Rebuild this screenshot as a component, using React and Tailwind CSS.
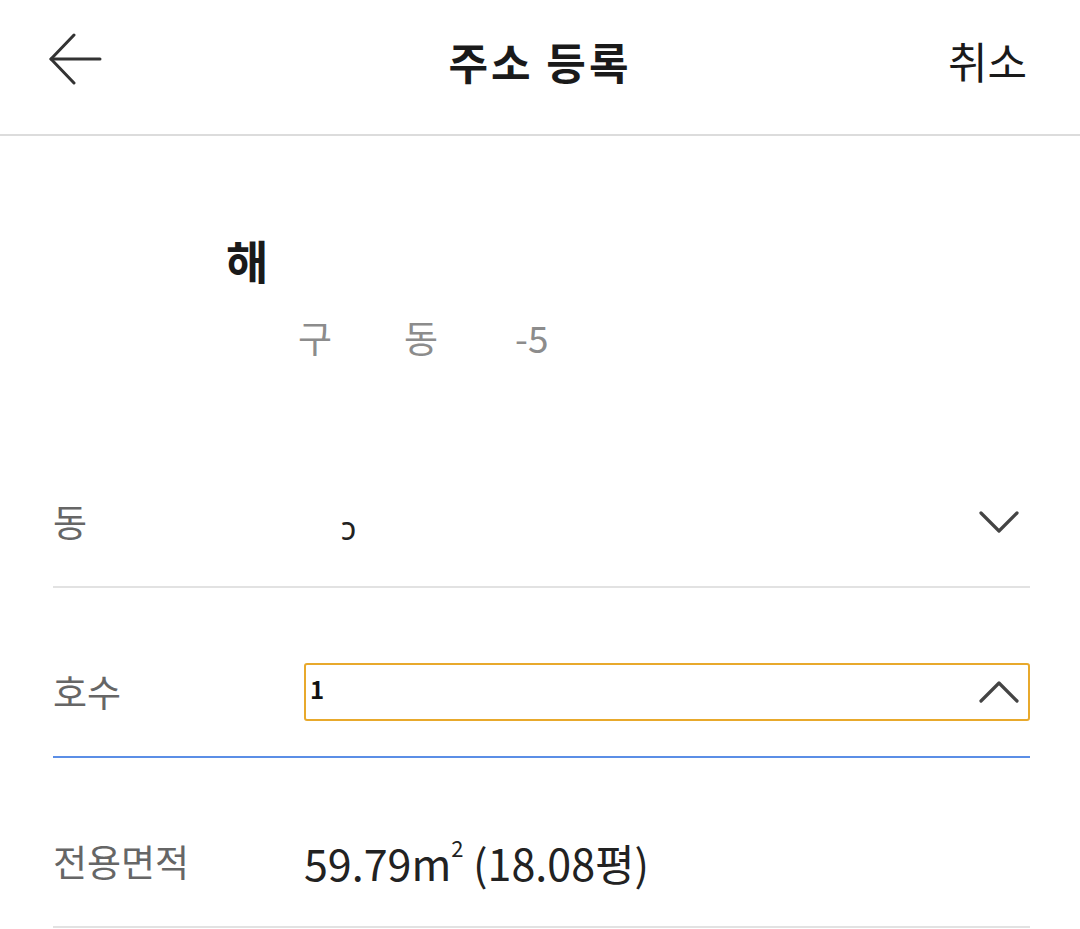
import React from "react";

const font = { fontFamily: '"Noto Sans CJK KR", "Noto Sans", sans-serif' };

function Chevron({ up }) {
  return (
    <svg width="40" height="24" viewBox="0 0 40 24" fill="none" stroke="#444" strokeWidth="3.2" strokeLinecap="round" strokeLinejoin="round">
      {up ? <polyline points="2,21 20,3 38,21" /> : <polyline points="2,3 20,21 38,3" />}
    </svg>
  );
}

export default function App() {
  return (
    <div className="w-[1080px] h-[929px] bg-white overflow-hidden" style={font}>
      {/* Header */}
      <div className="relative h-[136px] border-b-2 border-[#dcdcdc] flex items-center justify-between pl-[48px] pr-[53px]">
        <svg width="56" height="52" viewBox="0 0 56 52" fill="none" stroke="#333" strokeWidth="3" strokeLinecap="round" strokeLinejoin="round" className="-mt-[16px]">
          <line x1="3" y1="26" x2="52" y2="26" />
          <polyline points="26,2 3,26 26,50" />
        </svg>
        <div className="absolute left-0 right-0 top-[33px] text-center text-[43px] leading-[56px] tracking-[3px] font-bold text-[#1a1a1a] pointer-events-none">
          주소 등록
        </div>
        <div className="text-[43px] leading-[56px] text-[#1a1a1a] -mt-[14px]">취소</div>
      </div>

      {/* Address title */}
      <div className="pl-[226px] pt-[95px]">
        <div className="text-[46px] leading-[56px] font-bold text-[#1a1a1a]">해</div>
      </div>
      <div className="flex items-center h-[44px] mt-[28px] text-[37px] leading-[44px] text-[#8c8c8c]">
        <span className="ml-[298px]">구</span>
        <span className="ml-[72px]">동</span>
        <span className="ml-[77px]">-5</span>
      </div>

      {/* Rows */}
      <div className="mx-[53px] mt-[59px] w-[977px]">
        <div className="flex h-[170px] pt-[75px] pb-[35px] border-b-2 border-[#e2e2e2]">
          <div className="w-[251px] flex items-center text-[37px] text-[#666]">동</div>
          <div className="flex-1 flex items-center justify-between pr-[11px]">
            <span className="ml-[37px] mt-[8px] text-[32px] text-[#222]">ɔ</span>
            <Chevron />
          </div>
        </div>
        <div className="flex h-[170px] pt-[75px] pb-[35px] border-b-2 border-[#5b8ee6]">
          <div className="w-[251px] flex items-center text-[37px] text-[#666]">호수</div>
          <div className="flex-1 h-[58px] flex items-center justify-between border-2 border-[#e8a92c] rounded-[3px] pl-[4px] pr-[9px]">
            <span className="text-[24px] font-bold text-[#111] -mt-[6px]">1</span>
            <Chevron up />
          </div>
        </div>
        <div className="flex h-[170px] pt-[75px] pb-[35px] border-b-2 border-[#e2e2e2]">
          <div className="w-[251px] flex items-center text-[37px] text-[#666]">전용면적</div>
          <div className="flex-1 flex items-center text-[43px] text-[#222]">
            59.79m<sup className="text-[22px] -top-[15px]">2</sup>&nbsp;(18.08평)
          </div>
        </div>
      </div>
    </div>
  );
}
